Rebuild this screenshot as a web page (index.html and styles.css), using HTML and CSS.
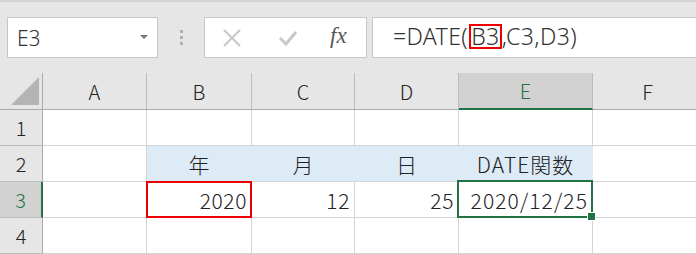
FILE: index.html
```html
<!DOCTYPE html>
<html>
<head>
  <title>DATE関数</title>
  <link rel="stylesheet" href="styles.css">
</head>
<body>
  <div class="ribbon">
    <div class="namebox">
      <span class="ref">E3</span>
      <span class="drop"></span>
    </div>
    <div class="grip"><i></i><i></i><i></i></div>
    <div class="buttons">
      <svg class="icon" width="20" height="20" viewBox="0 0 20 20">
        <path d="M2 2 L18 18 M18 2 L2 18" stroke="#c8c8c8" stroke-width="2.2" fill="none"/>
      </svg>
      <svg class="icon" width="22" height="20" viewBox="0 0 22 20">
        <path d="M3 10 L9 16 L19 4" stroke="#c8c8c8" stroke-width="3" fill="none"/>
      </svg>
      <span class="fx">fx</span>
    </div>
    <div class="formula">=DATE(<span class="hl">B3</span>,C3,D3)</div>
  </div>

  <div class="sheet">
    <div class="corner"><span class="tri"></span></div>
    <div class="colhead">A</div>
    <div class="colhead">B</div>
    <div class="colhead">C</div>
    <div class="colhead">D</div>
    <div class="colhead active">E</div>
    <div class="colhead">F</div>

    <div class="rowhead">1</div>
    <div class="cell"></div><div class="cell"></div><div class="cell"></div>
    <div class="cell"></div><div class="cell"></div><div class="cell"></div>

    <div class="rowhead">2</div>
    <div class="cell"></div>
    <div class="cell fill center">年</div>
    <div class="cell fill center">月</div>
    <div class="cell fill center">日</div>
    <div class="cell fill center wide">DATE関数</div>
    <div class="cell"></div>

    <div class="rowhead active">3</div>
    <div class="cell"></div>
    <div class="cell num ref-box">2020</div>
    <div class="cell num">12</div>
    <div class="cell num">25</div>
    <div class="cell num date selected">2020/12/25</div>
    <div class="cell"></div>

    <div class="rowhead">4</div>
    <div class="cell"></div><div class="cell"></div><div class="cell"></div>
    <div class="cell"></div><div class="cell"></div><div class="cell"></div>
  </div>
</body>
</html>
```

FILE: styles.css
```css
body {
  margin: 0;
  width: 696px;
  height: 254px;
  overflow: hidden;
  font-family: "Noto Sans CJK JP", "Noto Sans", sans-serif;
  color: #222;
}

.ribbon {
  height: 73px;
  box-sizing: border-box;
  background-color: #e6e6e6;
  border-top: 2px solid #d4d4d4;
  padding: 15px 0 0 7px;
  display: flex;
  align-items: flex-start;
}

.namebox {
  width: 151px;
  height: 41px;
  box-sizing: border-box;
  background-color: white;
  border: 1px solid #c6c6c6;
  display: flex;
  align-items: center;
  justify-content: space-between;
  padding: 0 9px 0 9px;
}

.namebox .ref {
  font-family: "Noto Sans", sans-serif;
  font-weight: 300;
  font-size: 21px;
  color: #333;
}

.drop {
  width: 0;
  height: 0;
  border-left: 4px solid transparent;
  border-right: 4px solid transparent;
  border-top: 4px solid #777;
  margin-top: -2px;
}

.grip {
  width: 46px;
  height: 41px;
  display: flex;
  flex-direction: column;
  align-items: center;
  justify-content: center;
  gap: 3px;
}

.grip i {
  width: 3px;
  height: 3px;
  background-color: #b0b0b0;
}

.buttons {
  width: 163px;
  height: 41px;
  box-sizing: border-box;
  background-color: white;
  border: 1px solid #c6c6c6;
  display: flex;
  align-items: center;
  padding: 0 0 0 17px;
  gap: 35px;
}

.fx {
  font-family: "Liberation Serif", serif;
  font-style: italic;
  font-size: 23px;
  color: #555;
  margin-left: -4px;
  margin-top: -3px;
}

.formula {
  margin-left: 5px;
  flex: 1;
  height: 41px;
  box-sizing: border-box;
  background-color: white;
  border: 1px solid #c6c6c6;
  border-right: none;
  padding: 6px 0 0 20px;
  font-family: "Noto Sans", sans-serif;
  font-weight: 300;
  font-size: 23px;
  letter-spacing: 0.4px;
  color: #333;
  line-height: 25px;
}

.formula .hl {
  display: inline-block;
  height: 25px;
  box-sizing: border-box;
  border: 2px solid #ee0000;
  line-height: 21px;
  padding: 0;
  margin: 0 0 0 1px;
  vertical-align: top;
}

.sheet {
  display: grid;
  grid-template-columns: 43px 104px 105px 103px 104px 134px 110px;
  grid-template-rows: 37px 36px 36px 36px 36px;
  font-size: 21px;
  font-weight: 300;
}

.corner,
.colhead,
.rowhead {
  background-color: #e6e6e6;
  border-right: 1px solid #ababab;
  border-bottom: 1px solid #ababab;
  box-sizing: border-box;
  display: flex;
  align-items: center;
  justify-content: center;
  font-size: 20px;
}

.colhead {
  border-right-color: #bcbcbc;
}

.rowhead {
  border-bottom-color: #bcbcbc;
}

.corner {
  position: relative;
}

.tri {
  position: absolute;
  left: 11px;
  bottom: 4px;
  width: 0;
  height: 0;
  border-left: 28px solid transparent;
  border-bottom: 28px solid #b4b4b4;
}

.colhead.active {
  background-color: #d2d2d2;
  border-bottom: 2px solid #217346;
  color: #217346;
}

.rowhead.active {
  background-color: #d2d2d2;
  border-right: 2px solid #217346;
  color: #217346;
}

.cell {
  box-sizing: border-box;
  border-right: 1px solid #d4d4d4;
  border-bottom: 1px solid #d4d4d4;
  display: flex;
  align-items: center;
  padding: 0 4px;
  position: relative;
}

.fill {
  background-color: #ddebf7;
  border-right-color: #ddebf7;
}

.center {
  justify-content: center;
}

.wide {
  letter-spacing: 1px;
}

.num {
  justify-content: flex-end;
  letter-spacing: 0.6px;
}

.date {
  letter-spacing: 1.1px;
}

.ref-box::after {
  content: "";
  position: absolute;
  left: -1px;
  top: -1px;
  right: -1px;
  bottom: -1px;
  border: 2px solid #ee0000;
}

.selected::after {
  content: "";
  position: absolute;
  left: -2px;
  top: -2px;
  right: -1px;
  bottom: -1px;
  border: 2px solid #217346;
}

.selected::before {
  content: "";
  position: absolute;
  right: -4px;
  bottom: -4px;
  width: 7px;
  height: 7px;
  background-color: #217346;
  border: 1px solid white;
  z-index: 1;
}
```
